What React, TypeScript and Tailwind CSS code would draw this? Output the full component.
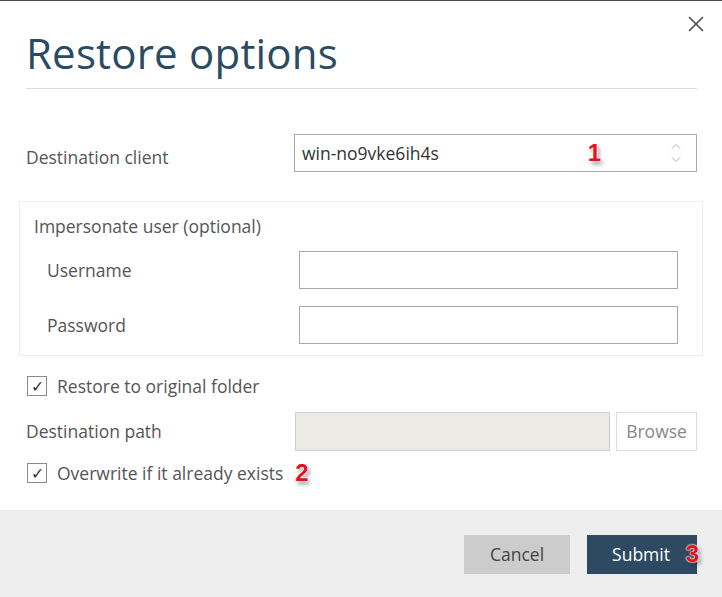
import { X } from "lucide-react"

function Marker({ n }: { n: string }) {
  return (
    <span className="font-['Liberation_Sans',sans-serif] text-[24px] font-bold leading-none text-[#e8101a] [text-shadow:0_0_1px_#fff,0_0_2px_#fff,0_0_2px_#fff,2px_3px_4px_rgba(0,0,0,0.45)]">
      {n}
    </span>
  )
}

function Check({ label, marker }: { label: string; marker?: string }) {
  return (
    <div className="flex items-center h-[20px]">
      <span className="w-[20px] h-[20px] border border-[#8a8a8a] bg-white flex items-center justify-center text-[16px] leading-none text-[#333] ml-[1px]">
        ✓
      </span>
      <span className="ml-[10px] text-[17.5px] text-[#555]">{label}</span>
      {marker && (
        <span className="ml-[12px] mt-[2px]">
          <Marker n={marker} />
        </span>
      )}
    </div>
  )
}

export default function App() {
  return (
    <div className="w-[722px] h-[597px] bg-white border-t border-[#4a4a4a] flex flex-col font-['Open_Sans',sans-serif] overflow-hidden">
      <div className="flex-1 relative pl-[26px] pr-[25px] pt-[22px]">
        <button className="absolute right-[13px] top-[10px] text-[#555]">
          <X size={26} strokeWidth={1.6} />
        </button>
        <h1 className="text-[42px] leading-[60px] text-[#2b4a63] tracking-[0.2px]">Restore options</h1>
        <div className="mt-[5px] border-t border-[#dedede]" />

        <div className="mt-[45px] flex items-center">
          <label className="w-[268px] pt-[8px] text-[17.5px] text-[#555]">Destination client</label>
          <div className="flex-1 h-[38px] border border-[#a8a8a8] flex items-center pl-[7px] pr-[15px]">
            <span className="text-[17.5px] text-[#333]">win-no9vke6ih4s</span>
            <span className="ml-auto mr-[70px] mt-[1px]">
              <Marker n="1" />
            </span>
            <span className="flex flex-col items-center text-[#b0b0b0]">
              <svg width="10" height="6" viewBox="0 0 10 6" fill="none" stroke="currentColor" strokeWidth="1">
                <path d="M1 5.5 L5 1.5 L9 5.5" />
              </svg>
              <svg width="10" height="6" viewBox="0 0 10 6" fill="none" stroke="currentColor" strokeWidth="1" className="mt-[8px]">
                <path d="M1 0.5 L5 4.5 L9 0.5" />
              </svg>
            </span>
          </div>
        </div>

        <div className="mt-[29px] -ml-[7px] -mr-[6px] border border-[#ececec] h-[155px] pl-[14px] pr-[24px] pt-[12px]">
          <div className="text-[17.5px] text-[#555] leading-[24px]">Impersonate user (optional)</div>
          <div className="mt-[13px] flex items-center">
            <label className="w-[265px] pl-[13px] text-[17.5px] text-[#555]">Username</label>
            <div className="flex-1 h-[38px] border border-[#a8a8a8]" />
          </div>
          <div className="mt-[17px] flex items-center">
            <label className="w-[265px] pl-[13px] text-[17.5px] text-[#555]">Password</label>
            <div className="flex-1 h-[38px] border border-[#a8a8a8]" />
          </div>
        </div>

        <div className="mt-[20px]">
          <Check label="Restore to original folder" />
        </div>

        <div className="mt-[16px] flex items-center">
          <label className="w-[269px] text-[17.5px] text-[#555]">Destination path</label>
          <div className="flex-1 h-[39px] bg-[#ebeae4] border border-[#cdcdcd]" />
          <button className="ml-[6px] w-[81px] h-[39px] border border-[#dcdcdc] bg-white text-[17.5px] text-[#888]">
            Browse
          </button>
        </div>

        <div className="mt-[12px]">
          <Check label="Overwrite if it already exists" marker="2" />
        </div>
      </div>

      <div className="h-[87px] bg-[#eeeeee] flex items-start justify-end pt-[25px] pr-[25px]">
        <button className="w-[106px] h-[39px] bg-[#cccccc] text-[17.5px] text-[#444]">Cancel</button>
        <button className="ml-[17px] w-[110px] h-[39px] bg-[#2d4a62] text-[17.5px] text-white flex items-center justify-center relative">
          <span className="ml-[-2px]">Submit</span>
          <span className="absolute right-[-2px] top-[7px]">
            <Marker n="3" />
          </span>
        </button>
      </div>
    </div>
  )
}
